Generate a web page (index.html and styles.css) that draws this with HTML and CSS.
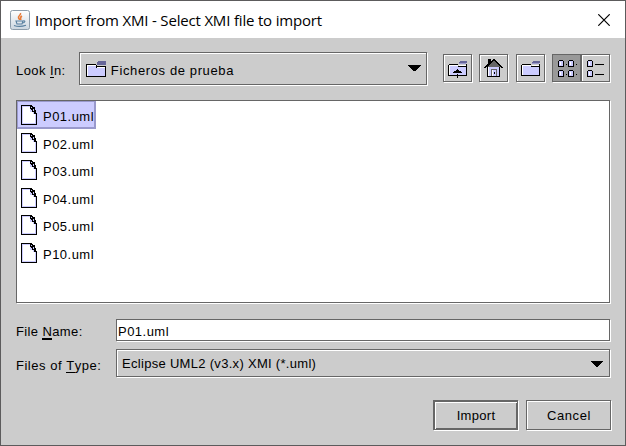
FILE: index.html
```html
<!DOCTYPE html>
<html lang="en">
<head>
<meta charset="utf-8">
<title>Import from XMI</title>
<link rel="stylesheet" href="styles.css">
</head>
<body>
<svg class="defs" width="0" height="0">
  <symbol id="doc" viewBox="0 0 16 20">
    <path fill="#000" d="M0 0h11v1h1v1h2v3h1v3h1v12H0z"/>
    <path fill="#ccf" d="M1 1h9v2h2v4h3v12H1z"/>
    <path fill="#fff" d="M2 2h7v5h3v2h2v9H2z"/>
    <path fill="#000" d="M9 1h2v1h2v2h1v2h1v3h-2V7h-2V5h-1V4H9z"/>
    <path fill="#ccf" d="M10 2h1v1h-1zM12 4h1v2h-1z"/>
  </symbol>
  <symbol id="folder" viewBox="0 0 20 16">
    <path fill="#000" d="M0 3h10v2h10v11H0z"/>
    <path fill="#ccf" d="M1 4h9v3h9v8H1z"/>
    <path fill="#fff" d="M1 4h9v1H2v10H1zM11 6h8v1h-8z"/>
    <path fill="#669" d="M12 0h8v4h-9V1h1z"/>
    <path fill="#000" d="M10 4h1v2h-1z"/>
  </symbol>
  <symbol id="folder-sm" viewBox="0 0 19 15">
    <path fill="#000" d="M1 3h9v2h8V3h1v12H0V4h1z"/>
    <path fill="#ccf" d="M1 4h9v2h8v8H1z"/>
    <path fill="#fff" d="M1 4h9v1H2v9H1zM11 4h7v1h-7z"/>
    <path fill="#669" d="M12 0h7v2h-8V1h1z"/>
    <path fill="#99c" d="M11 2h7v1h-7z"/>
  </symbol>
</svg>
<div class="window">
  <header class="titlebar">
    <svg class="java" width="20" height="20" viewBox="0 0 20 20">
      <defs><linearGradient id="g" x2="0" y2="1"><stop stop-color="#fff"/><stop offset="1" stop-color="#ccd6e0"/></linearGradient></defs>
      <rect x=".5" y=".5" width="19" height="19" rx="2" fill="url(#g)" stroke="#8d9caa"/>
      <path d="M10.5 3c1 2-3 3-2 5 .4 1 1 1 1 2M12 6c-2 1-2 2-1 4" fill="none" stroke="#e87b38" stroke-width="1.5"/>
      <path d="M6 11h7l-1 3H7zM13 11c3-1 2 2-.5 2" fill="none" stroke="#587f9f" stroke-width="1.1"/>
      <path d="M4 15.5q5.500 2 12-.2" fill="none" stroke="#587f9f" stroke-width="1.2"/>
    </svg>
    <span class="title">Import from XMI - Select XMI file to import</span>
    <svg class="close" width="12" height="12" viewBox="0 0 12 12"><path d="M.3.300 11.700 11.700M11.700.3.300 11.700" stroke="#000" stroke-width="1.200"/></svg>
  </header>
  <main class="body">
    <div class="look">
      <span class="label">Look <u>I</u>n:</span>
      <div class="flush look-combo">
        <svg width="20" height="16"><use href="#folder"/></svg>
        <span class="look-text">Ficheros de prueba</span>
        <svg class="arrow" width="13" height="6" viewBox="0 0 13 6"><path d="M0 0h13v1h-1v1h-1v1h-1v1H9v1H8v1H5V5H4V4H3V3H2V2H1V1H0z"/></svg>
      </div>
      <div class="flush tool up"><svg width="19" height="17" viewBox="0 0 19 17"><use href="#folder-sm" width="19" height="15"/><path d="M9 8h1v1h1v1h2v1h1v1H5v-1h1v-1h2V9h1zM9 13h1v4H9z"/></svg></div>
      <div class="flush tool home"><svg width="19" height="18" viewBox="0 0 19 18">
        <path fill="#000" d="M3 8h13v10H3z"/><path fill="#ccf" d="M4 8h11v9H4z"/><path fill="#fff" d="M4 8h1v9H4z"/>
        <path fill="#000" d="M4 0h3v4H4z"/>
        <path fill="#666" d="M9 1h2v1h1v1h1v1h1v1h1v1h1v2H3V7h1V6h1V5h1V4h1V3h1V2h1z"/>
        <path fill="#000" d="M9 0h2v1h1v1h1v1h1v1h1v1h1v1h1v1h1v1h1v1h-2V8h-1V7h-1V6h-1V5h-1V4h-1V3h-1V2H9v1H8v1H7v1H6v1H5v1H4v1H2v1H0V8h1V7h1V6h1V5h1V4h1V3h2V2h1V1h1z"/>
        <path fill="#666" d="M7 10h6v7h-1v-6H8v6H7z"/><path fill="#fff" d="M8 11h1v6H8z"/><path fill="#000" d="M10 13h1v2h-1z"/>
      </svg></div>
      <div class="flush tool new"><svg width="19" height="15"><use href="#folder-sm"/></svg></div>
      <div class="flush tool list pressed"><svg width="20" height="18" viewBox="0 0 20 18">
        <path d="M0 1h1V0h4v1h1v6H0zM10 1h1V0h4v1h1v6h-6zM0 11h1v-1h4v1h1v6H0zM10 11h1v-1h4v1h1v6h-6zM8 4h1v1H8zM18 4h1v1h-1zM8 14h1v1H8zM18 14h1v1h-1z"/>
        <path fill="#ccf" d="M1 1h4v5H1zM11 1h4v5h-4zM1 11h4v5H1zM11 11h4v5h-4z"/><path fill="#fff" d="M2 2h1v3H2zM12 2h1v3h-1zM2 12h1v3H2zM12 12h1v3h-1z"/>
      </svg></div>
      <div class="flush tool details"><svg width="17" height="18" viewBox="0 0 17 18">
        <path d="M0 1h1V0h4v1h1v6H0zM0 11h1v-1h4v1h1v6H0zM8 4h9v1H8zM8 14h9v1H8z"/>
        <path fill="#ccf" d="M1 1h4v5H1zM1 11h4v5H1z"/><path fill="#fff" d="M2 2h1v3H2zM2 12h1v3H2z"/>
      </svg></div>
    </div>
    <div class="files">
      <div class="file selected"><svg width="16" height="20"><use href="#doc"/></svg><span>P01.uml</span></div>
      <div class="file"><svg width="16" height="20"><use href="#doc"/></svg><span>P02.uml</span></div>
      <div class="file"><svg width="16" height="20"><use href="#doc"/></svg><span>P03.uml</span></div>
      <div class="file"><svg width="16" height="20"><use href="#doc"/></svg><span>P04.uml</span></div>
      <div class="file"><svg width="16" height="20"><use href="#doc"/></svg><span>P05.uml</span></div>
      <div class="file"><svg width="16" height="20"><use href="#doc"/></svg><span>P10.uml</span></div>
    </div>
    <div class="field name">
      <span class="label">File <u class="bold">N</u>ame:</span>
      <div class="input">P01.uml</div>
    </div>
    <div class="field type">
      <span class="label">Files of <u>T</u>ype:</span>
      <div class="flush type-combo"><span>Eclipse UML2 (v3.x) XMI (*.uml)</span>
        <svg class="arrow" width="12" height="6" viewBox="0 0 12 6"><path d="M0 0h12v1h-1v1h-1v1H9v1H8v1H7v1H5V5H4V4H3V3H2V2H1V1H0z"/></svg>
      </div>
    </div>
    <div class="actions">
      <div class="flush btn default">Import</div>
      <div class="flush btn">Cancel</div>
    </div>
  </main>
</div>
</body>
</html>
```
FILE: styles.css
```css
* { box-sizing: border-box; }
body { margin: 0; }
.defs { position: absolute; }
svg { display: block; flex: none; shape-rendering: crispEdges; }
.java, .close { shape-rendering: auto; }
.window {
  width: 626px; height: 446px; border: 1px solid #5c5b5c; background: #ccc;
  font: 13px/16px "Liberation Sans", Arial, sans-serif; letter-spacing: 0.62px;
  color: #000; white-space: nowrap; overflow: hidden;
}
.titlebar { height: 37px; background: #fff; display: flex; align-items: center; padding: 0 15px 0 9px; }
.title { font: 15px/20px "Open Sans", sans-serif; letter-spacing: -0.18px; margin-left: 5px; }
.close { margin-left: auto; }
.body { padding: 14px 15px 0; }
u { text-decoration: none; border-bottom: 1px solid #000; display: inline-block; height: 15px; }
.bold { border-bottom-width: 2px; height: 16px; }
.flush { border: 1px solid #666; box-shadow: inset 1px 1px #fff, 1px 1px #fff; }
.look { display: flex; align-items: flex-start; height: 48px; }
.look .label { width: 63px; margin-top: 11px; letter-spacing: 0.42px; }
.look-combo { width: 349px; height: 33px; display: flex; align-items: center; padding: 0 5px 0 6px; }
.look-text { margin: 4px 0 0 5px; }
.arrow { margin-left: auto; }
.look-combo .arrow { margin-top: -1px; }
.tool { width: 29px; height: 28px; margin-top: 2px; padding: 6px 4px; }
.up { margin-left: 16px; }
.home { margin-left: 7px; padding-top: 4px; }
.new { margin-left: 8px; }
.list { margin-left: 7px; padding: 5px; }
.details { padding: 5px; }
.pressed { background: #999; box-shadow: 1px 1px #fff; }
.files { width: 594px; height: 203px; background: #fff; border: 1px solid #666; box-shadow: 1px 1px #fff; }
.file { height: 27.5px; display: flex; align-items: flex-start; padding: 4px 0 0 4px; }
.file span { margin: 4px 0 0 6px; letter-spacing: 0.48px; }
.selected { width: 79px; background: #ccf; box-shadow: inset -2px -2px #99c, inset 1px 1px #99c; }
.field { display: flex; }
.field .label { width: 100px; }
.name { margin-top: 16px; height: 30px; }
.name .label { margin-top: 5px; letter-spacing: 0.38px; }
.input { width: 494px; height: 22px; border: 1px solid #666; box-shadow: 1px 1px #fff; background: #fff; padding: 4px 1px; letter-spacing: 0.48px; }
.type .label { margin-top: 9px; letter-spacing: 0.52px; }
.type-combo { width: 494px; height: 28px; display: flex; align-items: center; padding: 2px 6px 0 5px; letter-spacing: 0.3px; }
.type-combo .arrow { margin-top: -1px; }
.actions { display: flex; justify-content: flex-end; gap: 8px; margin-top: 23px; margin-right: -1px; }
.btn { width: 85px; height: 30px; text-align: center; padding: 7px 0 0 1px; }
.default { letter-spacing: 0.3px; box-shadow: inset 1px 1px #666, inset 2px 2px #fff, inset -1px -1px #666, 1px 1px #fff; }
```
